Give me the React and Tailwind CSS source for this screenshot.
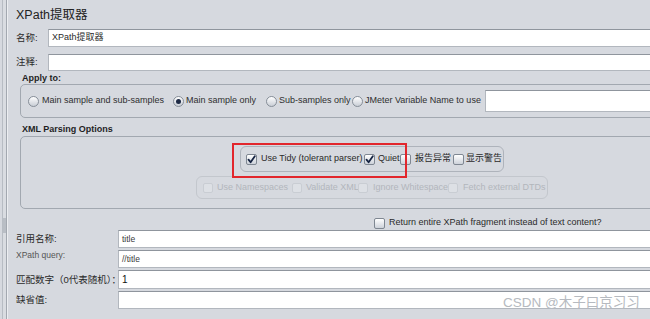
import React from "react";

const Radio = ({ on }) => (
  <span className="w-[11px] h-[11px] rounded-full border border-[#868e98] bg-linear-to-b from-[#ffffff] to-[#c9ced6] flex items-center justify-center shrink-0">
    {on && <span className="w-[5px] h-[5px] rounded-full bg-[#1d2a45]" />}
  </span>
);

const Check = ({ on, disabled, small }) => (
  <span
    className={
      (small ? "w-[10px] h-[10px] " : "w-[11px] h-[11px] ") +
      (disabled
        ? "border-[#c9cdd3] bg-[#dde0e5] "
        : "border-[#7f8792] bg-linear-to-b from-[#ffffff] to-[#cdd2da] ") +
      "rounded-[2px] border flex items-center justify-center shrink-0"
    }
  >
    {on && (
      <svg width="9" height="9" viewBox="0 0 9 9">
        <path d="M1.5 4.6 L3.6 7.2 L7.8 1.2" fill="none" stroke="#162443" strokeWidth="1.8" strokeLinecap="round" strokeLinejoin="round" />
      </svg>
    )}
  </span>
);

const Input = ({ children, className = "" }) => (
  <div className={"bg-white border border-[#b2b7be] border-t-[#8f959d] flex items-center pl-[3px] " + className}>
    {children}
  </div>
);

export default function App() {
  return (
    <div className="w-[650px] h-[319px] overflow-hidden bg-[#d6d9df] flex relative font-['Liberation_Sans','Noto_Sans_CJK_SC',sans-serif] text-[#2a2a2a]">
      {/* left splitter strip */}
      <div className="w-[8px] shrink-0 flex">
        <div className="w-[2px]" />
        <div className="w-[1px] bg-[#b7bcc3]" />
        <div className="w-[3px] bg-[#d9dce1] flex flex-col">
          <div className="mt-[218px] h-[15px] bg-[#b9bec5]" />
        </div>
        <div className="w-[1px] bg-[#a3a8b0]" />
        <div className="w-[1px] bg-[#eceef1]" />
      </div>

      <div className="flex-1 flex flex-col pl-[8px] min-w-0">
        {/* title */}
        <div className="mt-[7px] h-[17px] text-[12.5px] leading-[17px] text-[#222]">XPath提取器</div>

        {/* name */}
        <div className="mt-[5px] h-[18px] flex items-center">
          <div className="w-[32px] text-[9.5px]">名称:</div>
          <Input className="flex-1 h-full -mr-[4px] text-[9px]">XPath提取器</Input>
        </div>

        {/* comment */}
        <div className="mt-[7px] h-[17px] flex items-center">
          <div className="w-[32px] text-[9.5px]">注释:</div>
          <Input className="flex-1 h-full -mr-[4px]" />
        </div>

        {/* Apply to */}
        <div className="mt-[1px] h-[12px] leading-[12px] pl-[6px] text-[9px] font-bold text-[#1f1f1f]">Apply to:</div>
        <div className="ml-[4px] h-[34px] w-[640px] shrink-0 border border-[#a2a8b0] rounded-[5px] flex items-center pl-[7px] text-[9px] text-[#2f2f2f]">
          <Radio />
          <span className="ml-[3px] w-[124px] whitespace-nowrap">Main sample and sub-samples</span>
          <span className="ml-[7px]"><Radio on /></span>
          <span className="ml-[2px] w-[70px] whitespace-nowrap">Main sample only</span>
          <span className="ml-[10px]"><Radio /></span>
          <span className="ml-[2px] w-[70px] whitespace-nowrap">Sub-samples only</span>
          <span className="ml-[3px]"><Radio /></span>
          <span className="ml-[2px] w-[111px] whitespace-nowrap">JMeter Variable Name to use</span>
          <Input className="ml-[9px] h-[22px] flex-1" />
        </div>

        {/* XML parsing */}
        <div className="mt-[5px] h-[13px] leading-[13px] pl-[6px] text-[9px] font-bold text-[#1f1f1f]">XML Parsing Options</div>
        <div className="ml-[4px] h-[73px] w-[704px] shrink-0 border border-[#a2a8b0] rounded-[5px] flex flex-col items-center pt-[9px] relative text-[9px]">
          <div className="w-[264px] h-[26px] shrink-0 border border-[#aeb3bb] rounded-[6px] flex items-center pl-[5px] text-[#2a2a2a]">
            <Check on />
            <span className="ml-[4px] w-[101px] whitespace-nowrap">Use Tidy (tolerant parser)</span>
            <span className="ml-[2px]"><Check on /></span>
            <span className="ml-[3px] w-[21px] whitespace-nowrap">Quiet</span>
            <span className="ml-[1px]"><Check /></span>
            <span className="ml-[4px] w-[36px] whitespace-nowrap">报告异常</span>
            <span className="ml-[2px]"><Check /></span>
            <span className="ml-[2px] w-[36px] whitespace-nowrap">显示警告</span>
          </div>
          <div className="mt-[4px] w-[352px] h-[23px] shrink-0 border border-[#c3c7cd] rounded-[6px] flex items-center pl-[6px] text-[#b2b6bc]">
            <Check disabled small />
            <span className="ml-[4px] w-[72px] whitespace-nowrap">Use Namespaces</span>
            <span className="ml-[3px]"><Check disabled small /></span>
            <span className="ml-[4px] w-[50px] whitespace-nowrap">Validate XML</span>
            <span className="ml-[2px]"><Check disabled small /></span>
            <span className="ml-[5px] w-[74px] whitespace-nowrap">Ignore Whitespace</span>
            <span className="ml-[1px]"><Check disabled small /></span>
            <span className="ml-[5px] w-[79px] whitespace-nowrap">Fetch external DTDs</span>
          </div>
          {/* red annotation box */}
          <div className="absolute left-[211px] top-[6px] w-[175px] h-[35px] border-2 border-[#e2262c]" />
        </div>

        {/* return fragment */}
        <div className="mt-[8px] h-[12px] flex items-center pl-[358px] text-[9px] text-[#2a2a2a]">
          <Check />
          <span className="ml-[4px] whitespace-nowrap">Return entire XPath fragment instead of text content?</span>
        </div>

        {/* bottom fields */}
        <div className="mt-[1px] h-[18px] flex">
          <div className="w-[102px] text-[9.5px] leading-[18px]">引用名称:</div>
          <Input className="flex-1 -mr-[4px] text-[8.5px] text-[#3a3a3a]">title</Input>
        </div>
        <div className="mt-[2px] h-[18px] flex">
          <div className="w-[102px] text-[8.5px] leading-[10px] pt-[0px] text-[#555]">XPath query:</div>
          <Input className="flex-1 -mr-[4px] text-[8.5px] text-[#3a3a3a]">//title</Input>
        </div>
        <div className="mt-[2px] h-[19px] flex">
          <div className="w-[102px] text-[9.5px] leading-[19px] whitespace-nowrap">匹配数字（0代表随机）：</div>
          <Input className="flex-1 -mr-[4px] text-[10px] text-[#111]">1</Input>
        </div>
        <div className="mt-[2px] h-[18px] flex">
          <div className="w-[102px] text-[9.5px] leading-[18px]">缺省值:</div>
          <Input className="flex-1 -mr-[4px]" />
        </div>
      </div>

      {/* watermark */}
      <div className="absolute left-[503px] top-[295px] text-[13.5px] leading-[16px] text-[#b6bac0] whitespace-nowrap">CSDN @木子曰京习习</div>
    </div>
  );
}
